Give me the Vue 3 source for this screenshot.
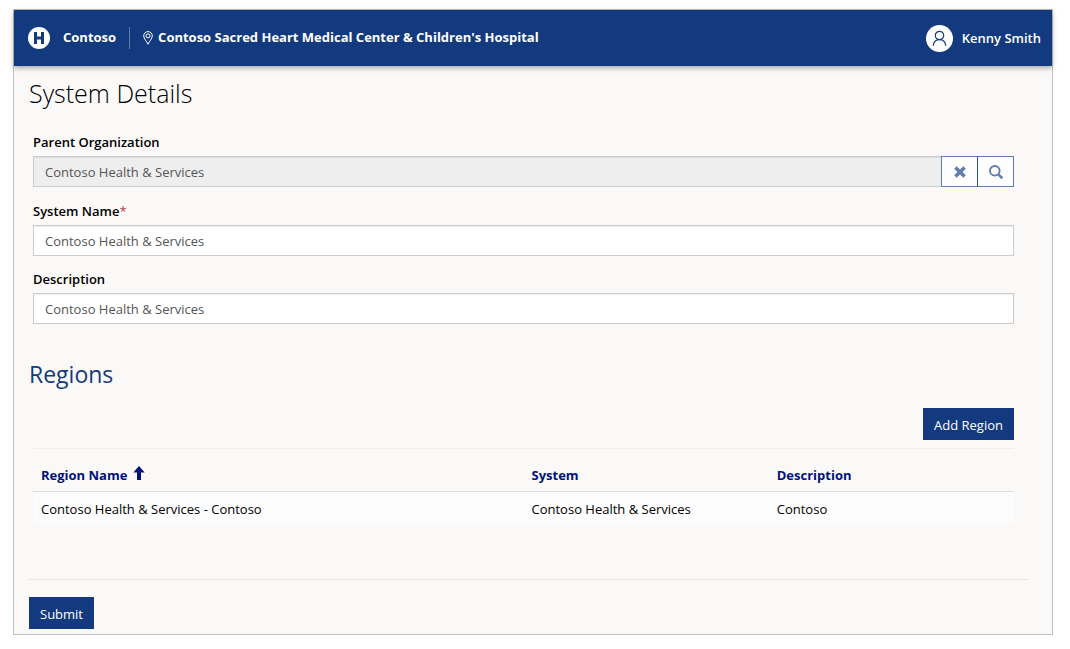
<script setup>
import { ref } from 'vue'

const parentOrganization = ref('Contoso Health & Services')
const systemName = ref('Contoso Health & Services')
const description = ref('Contoso Health & Services')

const regions = [
  { name: 'Contoso Health & Services - Contoso', system: 'Contoso Health & Services', description: 'Contoso' },
]
</script>

<template>
  <div class="frame">
    <header class="topbar">
      <svg class="logo" viewBox="0 0 22 22" aria-hidden="true">
        <circle cx="11" cy="11" r="11" fill="#fff" />
        <path d="M6 5h3v4.500h4V5h3v12h-3v-4.500H9V17H6z" fill="#133a7e" />
      </svg>
      <span class="brand">Contoso</span>
      <span class="divider"></span>
      <svg class="pin" viewBox="0 0 10 14" fill="none" stroke="#fff" aria-hidden="true">
        <path d="M5 13.300C4.200 11 .7 7.700.7 4.900a4.300 4.300 0 0 1 8.600 0C9.300 7.700 5.800 11 5 13.300z" />
        <circle cx="5" cy="4.900" r="2" />
      </svg>
      <span class="facility">Contoso Sacred Heart Medical Center &amp; Children's Hospital</span>
      <div class="user">
        <svg class="avatar" viewBox="0 0 27 27" fill="none" stroke="#133a7e" stroke-width="1.200" aria-hidden="true">
          <circle cx="13.500" cy="13.500" r="13.500" fill="#fff" stroke="none" />
          <circle cx="13.500" cy="10.500" r="4.200" />
          <path d="M7.300 20.800c.3-3.600 2.800-6.100 6.200-6.100s5.900 2.500 6.200 6.100" />
        </svg>
        <span>Kenny Smith</span>
      </div>
    </header>

    <main class="content">
      <h1>System Details</h1>
      <form @submit.prevent>
        <div class="section">
          <div class="field lookup-field">
            <label for="parent">Parent Organization</label>
            <div class="lookup">
              <input id="parent" v-model="parentOrganization" type="text" readonly />
              <button type="button" class="icon-button" aria-label="Clear">
                <svg viewBox="0 0 14 14" aria-hidden="true">
                  <path d="M3.700 1.200 7 4.500l3.300-3.300 2.500 2.500L9.500 7l3.300 3.300-2.500 2.500L7 9.500l-3.300 3.300-2.500-2.500L4.500 7 1.200 3.700z" fill="#5f7cae" />
                </svg>
              </button>
              <button type="button" class="icon-button" aria-label="Search">
                <svg viewBox="0 0 14 14" fill="none" stroke="#5f7cae" aria-hidden="true">
                  <circle cx="5.800" cy="5.800" r="4.800" stroke-width="1.900" />
                  <path d="m9.300 9.300 4 4" stroke-width="2.500" />
                </svg>
              </button>
            </div>
          </div>
          <div class="field">
            <label for="name">System Name<span class="required">*</span></label>
            <input id="name" v-model="systemName" type="text" required />
          </div>
          <div class="field">
            <label for="description">Description</label>
            <input id="description" v-model="description" type="text" />
          </div>
        </div>

        <h2>Regions</h2>
        <div class="section">
          <div class="toolbar">
            <button type="button" class="primary">Add Region</button>
          </div>
          <table>
            <thead>
              <tr>
                <th class="wide" scope="col" aria-sort="ascending">
                  <a href="#">Region Name
                    <svg class="sort" viewBox="0 0 12 14" aria-hidden="true">
                      <path d="M6 0l5.700 6.500H8V14H4V6.500H.3z" fill="#00127a" />
                    </svg>
                  </a>
                </th>
                <th scope="col"><a href="#">System</a></th>
                <th scope="col"><a href="#">Description</a></th>
              </tr>
            </thead>
            <tbody>
              <tr v-for="region in regions" :key="region.name">
                <td>{{ region.name }}</td>
                <td>{{ region.system }}</td>
                <td>{{ region.description }}</td>
              </tr>
            </tbody>
          </table>
        </div>

        <div class="actions">
          <button type="submit" class="primary">Submit</button>
        </div>
      </form>
    </main>
  </div>
</template>

<style>
body {
  background: #fff;
}
</style>

<style scoped>
.frame {
  margin: 9px 17px 14px 13px;
  border: 1px solid #c0c0c0;
  background: #faf9f8;
  color: #000;
  font: 13px/20px "Open Sans", "Noto Sans", sans-serif;
}
.frame * {
  box-sizing: border-box;
}
.topbar {
  display: flex;
  align-items: center;
  height: 56px;
  padding: 0 11px 0 14px;
  background: #133a7e;
  box-shadow: 0 2px 5px rgba(0, 0, 0, 0.35);
  color: #fff;
  font-weight: 600;
}
.logo {
  width: 22px;
  height: 22px;
}
.brand,
.facility {
  padding-bottom: 2px;
  font-weight: 700;
}
.brand {
  margin-left: 13px;
}
.divider {
  width: 1px;
  height: 22px;
  margin: 0 13px;
  background: #5f7cae;
}
.pin {
  width: 10px;
  height: 14px;
  margin-right: 5px;
}
.user {
  display: flex;
  align-items: center;
  gap: 9px;
  margin-left: auto;
}
.avatar {
  width: 27px;
  height: 27px;
}
.content {
  padding: 11px 24px 5px 15px;
}
h1,
h2 {
  margin: 0;
  font-weight: 400;
  line-height: 32px;
}
h1 {
  font-size: 25px;
  font-weight: 300;
}
h2 {
  margin-top: 34px;
  color: #133a7e;
  font-size: 23px;
}
.section {
  padding: 0 14px 0 4px;
}
h1 + form {
  padding-top: 25px;
}
.field {
  margin-bottom: 15px;
}
.lookup-field {
  margin-bottom: 16px;
}
label {
  display: block;
  margin-bottom: 6px;
  line-height: 16px;
  font-weight: 600;
}
.required {
  color: #a94442;
  font-weight: 400;
}
input {
  display: block;
  width: 100%;
  height: 31px;
  padding: 0 11px;
  border: 1px solid #ccc;
  border-radius: 0;
  background: #fff;
  box-shadow: inset 0 1px 1px rgba(0, 0, 0, 0.07);
  color: #555;
  font: inherit;
}
input[readonly] {
  background: #eee;
}
.lookup {
  display: flex;
}
.lookup input {
  flex: 1;
  min-width: 0;
  border-right: 0;
}
.icon-button {
  display: grid;
  place-items: center;
  width: 37px;
  height: 31px;
  padding: 0;
  border: 1px solid #5f7cae;
  background: #fdfdfd;
}
.icon-button + .icon-button {
  margin-left: -1px;
  border-left-color: #304f8b;
}
.icon-button svg {
  width: 14px;
  height: 14px;
}
.primary {
  height: 32px;
  padding: 2px 10px 0;
  border: 1px solid #133a7e;
  background: #133a7e;
  color: #fff;
  font: inherit;
}
.toolbar {
  display: flex;
  justify-content: flex-end;
  margin-top: 18px;
  padding-bottom: 8px;
  border-bottom: 1px solid #eee;
}
table {
  width: 100%;
  table-layout: fixed;
  border-collapse: collapse;
}
th,
td {
  padding: 0 8px;
  text-align: left;
}
th {
  width: 25%;
  height: 42px;
  padding-top: 11px;
  border-bottom: 1px solid #ddd;
  font-weight: 700;
}
th.wide {
  width: 50%;
}
th a {
  color: #00127a;
  text-decoration: none;
}
.sort {
  width: 12px;
  height: 14px;
  margin-left: 2px;
}
td {
  height: 33px;
  padding-top: 2px;
  background: #fcfcfc;
}
.actions {
  margin-top: 55px;
  padding-top: 17px;
  border-top: 1px solid #e5e5e5;
}
</style>
